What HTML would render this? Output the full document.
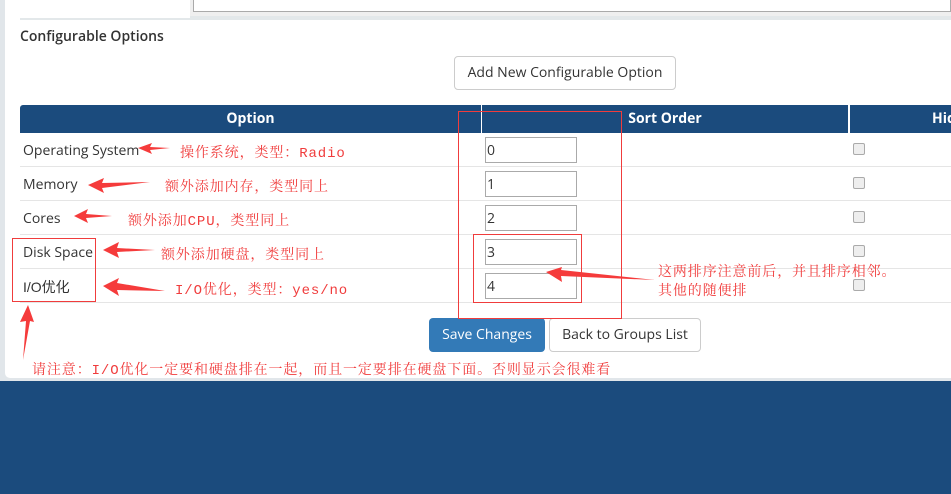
<!DOCTYPE html>
<html><head><meta charset="utf-8"><style>
*{margin:0;padding:0;box-sizing:border-box}
body{width:951px;height:494px;position:relative;overflow:hidden;background:#1b4b7d;font-family:"Open Sans","Liberation Sans","Noto Sans CJK SC",sans-serif;}
.a{position:absolute}
.cn{font-family:"Liberation Mono","Noto Serif CJK SC",monospace;color:#f03c3c;font-size:14px;white-space:nowrap;letter-spacing:0.9px}
.t{font-size:14px;color:#333;white-space:nowrap}
.inp{position:absolute;left:485px;width:92px;height:26px;border:1px solid #aaa;background:#fff;font-size:14px;padding:3px 1px;color:#333}
.cb{position:absolute;left:853px;width:12px;height:12px;border:1px solid #aaa;border-radius:2px;background:#eee}
.hl{position:absolute;left:20px;width:931px;height:1px;background:#e5e5e5}
</style></head><body>
<div class="a" style="left:0;top:0;width:951px;height:381px;background:#e1e6ea"></div>
<div class="a" style="left:5px;top:0;width:946px;height:378px;background:#fff;border-bottom-left-radius:5px"></div>
<div class="a" style="left:20px;top:0;width:931px;height:20px;background:#e3e8ea"></div>
<div class="a" style="left:20px;top:0;width:170px;height:18px;background:#fff"></div>
<div class="a" style="left:190px;top:0;width:761px;height:16px;background:#efefef"></div>
<div class="a" style="left:193px;top:0;width:758px;height:12px;background:#fff;border:1px solid #aaa;border-top:none"></div>
<div class="a" style="left:20px;top:27px;font-size:14px;color:#333;font-weight:600">Configurable Options</div>
<div class="a" style="left:454px;top:56px;width:222px;height:34px;border:1px solid #ccc;border-radius:4px;font-size:14px;color:#333;text-align:center;line-height:32px">Add New Configurable Option</div>
<div class="a" style="left:20px;top:105px;width:461px;height:28px;background:#1b4b7d;border-radius:3px 0 0 0;color:#fff;font-weight:bold;font-size:14px;text-align:center;line-height:28px">Option</div>
<div class="a" style="left:482px;top:105px;width:366px;height:28px;background:#1b4b7d;color:#fff;font-weight:bold;font-size:14px;text-align:center;line-height:28px">Sort Order</div>
<div class="a" style="left:850px;top:105px;width:101px;height:28px;background:#1b4b7d;color:#fff;font-weight:bold;font-size:14px;line-height:28px;padding-left:82px;overflow:hidden">Hid</div>
<div class="hl" style="top:166px"></div><div class="hl" style="top:200px"></div><div class="hl" style="top:234px"></div><div class="hl" style="top:268px"></div><div class="hl" style="top:302px"></div>
<div class="a t" style="left:23px;top:141px">Operating System</div>
<div class="a t" style="left:23px;top:175px">Memory</div>
<div class="a t" style="left:23px;top:209px">Cores</div>
<div class="a t" style="left:23px;top:243px">Disk Space</div>
<div class="a t" style="left:23px;top:277px;font-family:'Liberation Sans','Noto Sans CJK SC',sans-serif">I/O优化</div>
<div class="inp" style="top:137px">0</div><div class="inp" style="top:171px">1</div><div class="inp" style="top:205px">2</div><div class="inp" style="top:239px">3</div><div class="inp" style="top:273px">4</div>
<div class="cb" style="top:143px"></div><div class="cb" style="top:177px"></div><div class="cb" style="top:211px"></div><div class="cb" style="top:245px"></div><div class="cb" style="top:279px"></div>
<div class="a" style="left:429px;top:318px;width:116px;height:34px;background:#337ab7;border-radius:4px;color:#fff;font-size:14px;text-align:center;line-height:34px">Save Changes</div>
<div class="a" style="left:549px;top:318px;width:152px;height:34px;border:1px solid #ccc;border-radius:4px;color:#333;font-size:14px;text-align:center;line-height:32px">Back to Groups List</div>
<div class="a cn" style="left:180px;top:142px">操作系统，类型：Radio</div>
<div class="a cn" style="left:165px;top:176px">额外添加内存，类型同上</div>
<div class="a cn" style="left:128px;top:210px">额外添加CPU，类型同上</div>
<div class="a cn" style="left:161px;top:244px">额外添加硬盘，类型同上</div>
<div class="a cn" style="left:175px;top:279px">I/O优化，类型：yes/no</div>
<div class="a cn" style="left:658px;top:264px;line-height:19px">这两排序注意前后，并且排序相邻。<br>其他的随便排</div>
<div class="a cn" style="left:32px;top:359px">请注意：I/O优化一定要和硬盘排在一起，而且一定要排在硬盘下面。否则显示会很难看</div>
<svg class="a" style="left:0;top:0" width="951" height="494">
<g fill="none" stroke="#f03c3c" stroke-width="1">
<rect x="12.5" y="238.5" width="83" height="63"/>
<rect x="458.5" y="111.5" width="163" height="207"/>
<rect x="473.5" y="234.5" width="108" height="68"/>
</g>
<g fill="#f53b3b">
<polygon points="138,148 152,143 150,147 170,148 150,150 152,154"/>
<polygon points="88,185 104,178 102,183 150,182 102,188 104,193"/>
<polygon points="74,216 88,209 86,214 112,216 86,218 88,223"/>
<polygon points="103,250 119,242 117,248 155,250 117,252 119,258"/>
<polygon points="103,286 119,278 117,283 165,291 117,290 119,296"/>
<polygon points="546,272 562,267 561,270 655,280 561,276 562,282"/>
<polygon points="28,305 34,322 30,321 23,360 26,321 20,322"/>
</g>
</svg>
</body></html>
